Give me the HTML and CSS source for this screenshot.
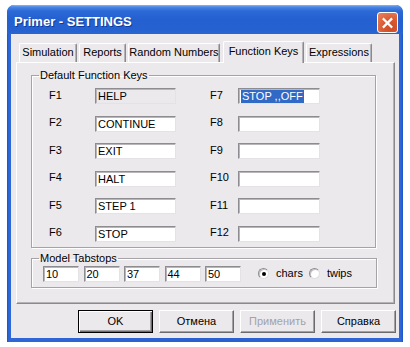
FILE: index.html
```html
<!DOCTYPE html>
<html>
<head>
<meta charset="utf-8">
<title>Primer - SETTINGS</title>
<link rel="stylesheet" href="styles.css">
</head>
<body>
<div class="window">
  <div class="titlebar">
    <span class="title">Primer - SETTINGS</span>
    <span class="close">
      <svg width="20" height="20" viewBox="0 0 20 20"><path d="M6 6 L14 14 M14 6 L6 14" stroke="#fff" stroke-width="2.4" stroke-linecap="square"/></svg>
    </span>
  </div>
  <div class="client">
    <div class="tabs">
      <div class="tab w-sim">Simulation</div>
      <div class="tab w-rep">Reports</div>
      <div class="tab w-rnd">Random Numbers</div>
      <div class="tab active w-fk">Function Keys</div>
      <div class="tab w-exp">Expressions</div>
    </div>
    <div class="panel">
      <fieldset class="group keys">
        <legend>Default Function Keys</legend>
        <div class="keycols">
          <div class="keycol left">
            <div class="keyrow"><span class="klabel">F1</span><div class="field readonly">HELP</div></div>
            <div class="keyrow"><span class="klabel">F2</span><div class="field">CONTINUE</div></div>
            <div class="keyrow"><span class="klabel">F3</span><div class="field">EXIT</div></div>
            <div class="keyrow"><span class="klabel">F4</span><div class="field">HALT</div></div>
            <div class="keyrow"><span class="klabel">F5</span><div class="field">STEP 1</div></div>
            <div class="keyrow"><span class="klabel">F6</span><div class="field">STOP</div></div>
          </div>
          <div class="keycol right">
            <div class="keyrow"><span class="klabel">F7</span><div class="field"><span class="sel">STOP ,,OFF</span></div></div>
            <div class="keyrow"><span class="klabel">F8</span><div class="field"></div></div>
            <div class="keyrow"><span class="klabel">F9</span><div class="field"></div></div>
            <div class="keyrow"><span class="klabel">F10</span><div class="field"></div></div>
            <div class="keyrow"><span class="klabel">F11</span><div class="field"></div></div>
            <div class="keyrow"><span class="klabel">F12</span><div class="field"></div></div>
          </div>
        </div>
      </fieldset>
      <fieldset class="group tabstops">
        <legend>Model Tabstops</legend>
        <div class="tsrow">
          <div class="field ts">10</div>
          <div class="field ts">20</div>
          <div class="field ts">37</div>
          <div class="field ts">44</div>
          <div class="field ts">50</div>
          <span class="radio checked"></span><span class="rlabel">chars</span>
          <span class="radio"></span><span class="rlabel">twips</span>
        </div>
      </fieldset>
    </div>
    <div class="buttons">
      <div class="btn default">OK</div>
      <div class="btn">Отмена</div>
      <div class="btn disabled">Применить</div>
      <div class="btn">Справка</div>
    </div>
  </div>
</div>
</body>
</html>
```

FILE: styles.css
```css
* { box-sizing: border-box; }
html, body { margin: 0; padding: 0; background: #fff; }
body {
  font-family: "Liberation Sans", Arial, sans-serif;
  font-size: 11px;
  color: #000;
}
.window {
  margin: 5px 0 0 7px;
  width: 396px;
  height: 337px;
  background: linear-gradient(to right, #1f52c4 0, #2e67d8 2px, #2a5fd0 50%, #2e67d8 calc(100% - 2px), #1f52c4 100%);
  border-radius: 7px 7px 0 0;
  padding: 0 4px 4px 4px;
  display: flex;
  flex-direction: column;
  position: relative;
  overflow: hidden;
}
.titlebar {
  height: 29px;
  margin: 0 -4px;
  padding: 5px 5px 0 7px;
  display: flex;
  align-items: center;
  justify-content: space-between;
  background: linear-gradient(to bottom, #8db6f2 0, #4a86e4 2px, #2c69d6 6px, #2460cf 14px, #2561cf 24px, #2a66d2 29px);
  border-radius: 7px 7px 0 0;
}
.title {
  color: #fff;
  font-weight: bold;
  font-size: 13px;
  text-shadow: 1px 1px 0 #0e3a9c;
  padding-bottom: 1px;
}
.close {
  width: 21px;
  height: 21px;
  margin-top: 1px;
  border: 1px solid #fff;
  border-radius: 3px;
  background: radial-gradient(circle at 70% 80%, #cf4c26 0, #d9582f 40%, #e98563 100%);
  display: flex;
  align-items: center;
  justify-content: center;
}
.close svg { display: block; }
.client {
  flex: 1;
  background: #ece9ed;
  display: flex;
  flex-direction: column;
}
.tabs {
  margin-top: 7px;
  height: 21px;
  padding-left: 8px;
  display: flex;
  align-items: flex-end;
  position: relative;
  z-index: 1;
}
.tab {
  height: 19px;
  border-top: 1px solid #fff;
  border-left: 1px solid #fff;
  border-right: 1px solid #8a898d;
  box-shadow: inset -1px 0 0 #b5b3b7;
  border-radius: 2px 2px 0 0;
  text-align: center;
  line-height: 17px;
  margin-right: 2px;
  white-space: nowrap;
}
.tab.active {
  height: 22px;
  margin-bottom: -1px;
  background: #ece9ed;
  line-height: 19px;
  margin-right: 2px;
}
.w-sim { width: 58px; }
.w-rep { width: 47px; }
.w-rnd { width: 92px; margin-right: 3px; }
.w-fk { width: 81px; }
.w-exp { width: 66px; }
.panel {
  margin-left: 5px;
  width: 379px;
  height: 242px;
  border-top: 1px solid #fff;
  border-left: 1px solid #fff;
  border-right: 1px solid #8a898d;
  border-bottom: 1px solid #8a898d;
  box-shadow: inset -1px -1px 0 #b5b3b7;
  padding: 6px 0 0 14px;
}
.group {
  margin: 0;
  padding: 0;
  min-width: 0;
  width: 345px;
  border: 1px solid #a5a3a8;
  box-shadow: inset 1px 1px 0 #fff, 1px 1px 0 #fff;
}
.group legend {
  margin-left: 7px;
  padding: 0 1px;
  line-height: 13px;
  height: 13px;
}
.keys { padding-bottom: 5px; }
.keycols {
  margin-top: 6px;
  padding-left: 17px;
  display: flex;
}
.keycol {
  display: flex;
  flex-direction: column;
  gap: 11.6px;
}
.keycol.right { margin-left: 34px; }
.keyrow {
  display: flex;
  align-items: center;
  height: 16px;
}
.klabel { width: 46px; padding-bottom: 3px; }
.right .klabel { width: 28px; }
.field {
  width: 81px;
  height: 16px;
  background: #fff;
  border-top: 1px solid #8d8c90;
  border-left: 1px solid #8d8c90;
  border-right: 1px solid #e4e2e6;
  border-bottom: 1px solid #e4e2e6;
  box-shadow: inset 1px 1px 0 #b8b6ba;
  padding: 0 0 0 2px;
  line-height: 14px;
  white-space: nowrap;
  overflow: hidden;
}
.right .field { width: 82px; }
.field.readonly { background: #ece9ed; }
.sel {
  background: #3169c6;
  color: #fff;
  padding: 0 1px 0 1px;
  display: inline-block;
  line-height: 13px;
}
.tabstops {
  margin-top: 4px;
  width: 346px;
  padding-bottom: 5px;
}
.tsrow {
  margin-top: 1px;
  padding-left: 11px;
  display: flex;
  align-items: center;
  height: 16px;
}
.field.ts {
  width: 36px;
  margin-right: 4.5px;
}
.field.ts:nth-child(5) { margin-right: 17px; }
.radio {
  width: 11px;
  height: 11px;
  border-radius: 50%;
  background: #fff;
  border: 1px solid;
  border-color: #8d8c90 #dedde0 #dedde0 #8d8c90;
  box-shadow: inset 1px 1px 0 #c4c2c6;
  display: flex;
  align-items: center;
  justify-content: center;
  margin-right: 7px;
}
.radio.checked::after {
  content: "";
  width: 4px;
  height: 4px;
  border-radius: 50%;
  background: #000;
}
.rlabel { margin-right: 6px; padding-bottom: 1px; }
.buttons {
  margin-top: 6px;
  padding-right: 3px;
  display: flex;
  justify-content: flex-end;
  gap: 6px;
}
.btn {
  width: 75px;
  height: 23px;
  border: 1px solid;
  border-color: #fff #6b6a6e #6b6a6e #fff;
  box-shadow: inset -1px -1px 0 #a3a1a6;
  display: flex;
  align-items: center;
  justify-content: center;
  padding-bottom: 1px;
}
.btn.default {
  border: 1px solid #000;
  box-shadow: inset 1px 1px 0 #fff, inset -1px -1px 0 #6b6a6e, inset -2px -2px 0 #a3a1a6;
}
.btn.disabled { color: #a4a2a7; }
```
